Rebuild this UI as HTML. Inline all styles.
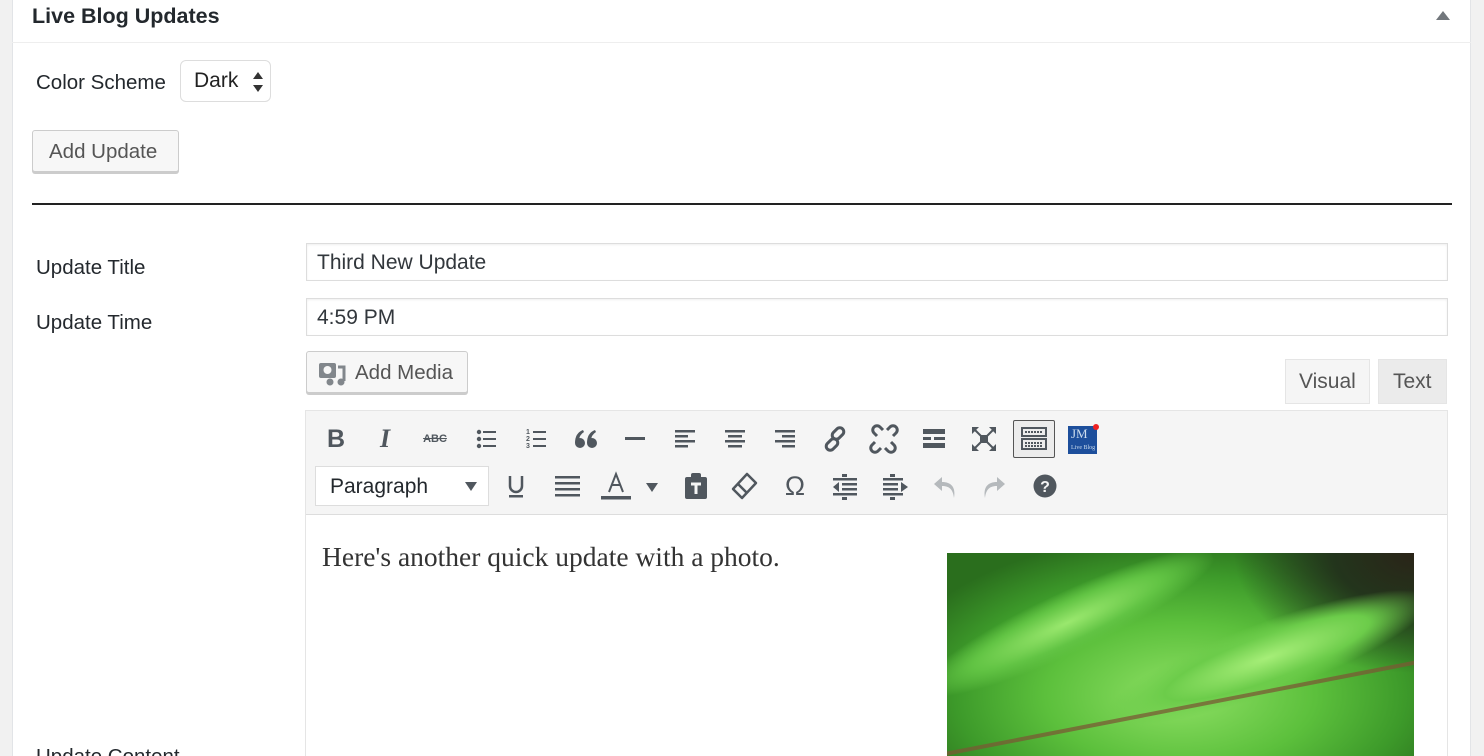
<!DOCTYPE html>
<html><head><meta charset="utf-8"><style>
*{box-sizing:border-box;margin:0;padding:0}
html,body{width:1484px;height:756px;overflow:hidden}
body{background:#f1f1f1;font-family:"Liberation Sans",sans-serif;color:#23282d;position:relative}
.panel{position:absolute;left:12px;top:-2px;width:1459px;height:758px;background:#fff;border:1px solid #e2e4e7;border-bottom:none}
.a{position:absolute}
.lbl{font-size:20.5px;color:#23282d}
.inp{position:absolute;left:306px;width:1142px;height:38px;border:1px solid #ddd;box-shadow:inset 0 1px 2px rgba(0,0,0,.07);font-size:21px;padding:7px 10px;color:#32373c}
.btn{position:absolute;background:#f7f7f7;border:1px solid #ccc;border-radius:3px;box-shadow:0 2px 0 #ccc;font-size:20.5px;color:#555}
.ic{position:absolute;top:0;width:30px;height:30px;display:flex;align-items:center;justify-content:center;color:#50575e;font-weight:bold}
</style></head><body>
<div class="panel"></div>
<div class="a" style="left:12px;top:42px;width:1459px;height:1px;background:#eee"></div>
<div class="a" style="left:32px;top:4px;font-size:21.5px;font-weight:bold;color:#23282d">Live Blog Updates</div>
<div class="a" style="left:1436px;top:11px;width:0;height:0;border-left:7px solid transparent;border-right:7px solid transparent;border-bottom:9px solid #72777c"></div>
<div class="a lbl" style="left:36px;top:71px">Color Scheme</div>
<div class="a" style="left:180px;top:60px;width:91px;height:42px;border:1px solid #ddd;border-radius:6px;font-size:21px;padding:8px 0 0 13px;color:#222">Dark</div>
<svg class="a" style="left:252px;top:71px" width="12" height="22"><path d="M6 1 L11 8 H1Z M6 21 L11 14 H1Z" fill="#333"/></svg>
<div class="btn" style="left:32px;top:130px;width:147px;height:42px;padding:9px 0 0 16px">Add Update</div>
<div class="a" style="left:32px;top:203px;width:1420px;height:2px;background:#222"></div>
<div class="a lbl" style="left:36px;top:256px">Update Title</div>
<div class="a lbl" style="left:36px;top:311px">Update Time</div>
<div class="inp" style="top:243px">Third New Update</div>
<div class="inp" style="top:298px">4:59 PM</div>
<div class="btn" style="left:306px;top:351px;width:162px;height:42px;padding:9px 0 0 48px">Add Media</div>
<svg class="a" style="left:318px;top:361px" width="28" height="26"><rect x="1" y="2" width="17" height="15" rx="2" fill="#82878c"/><circle cx="9.5" cy="9" r="4" fill="#f7f7f7"/><path d="M20 6 h6 v14" stroke="#82878c" stroke-width="3" fill="none"/><circle cx="23" cy="21" r="3.5" fill="#82878c"/><circle cx="12" cy="21" r="3.5" fill="#82878c"/></svg>
<div class="a" style="left:1285px;top:359px;width:85px;height:45px;background:#f5f5f5;border:1px solid #e5e5e5;font-size:21px;color:#555;padding:10px 0 0 13px">Visual</div>
<div class="a" style="left:1378px;top:359px;width:69px;height:45px;background:#ebebeb;border:1px solid #e5e5e5;font-size:21px;color:#555;padding:10px 0 0 14px">Text</div>
<div class="a" style="left:305px;top:410px;width:1143px;height:346px;border:1px solid #e5e5e5;border-bottom:none;background:#fff"></div>
<div class="a" style="left:306px;top:411px;width:1141px;height:104px;background:#f5f5f5;border-bottom:1px solid #ddd"></div>
<div class="a" style="left:0;top:424px;width:1484px;height:30px">
<div class="ic" style="left:321px;font-size:25px">B</div>
<div class="ic" style="left:370px;font-size:26px;font-style:italic;font-family:'Liberation Serif',serif">I</div>
<div class="ic" style="left:420px;font-size:11px;text-decoration:line-through">ABC</div>
<svg class="ic" style="left:471px" viewBox="0 0 30 30"><g fill="#50575e"><circle cx="8" cy="8" r="2.2"/><circle cx="8" cy="15" r="2.2"/><circle cx="8" cy="22" r="2.2"/><rect x="12" y="7" width="13" height="2"/><rect x="12" y="14" width="13" height="2"/><rect x="12" y="21" width="13" height="2"/></g></svg>
<svg class="ic" style="left:521px" viewBox="0 0 30 30"><g fill="#50575e"><text x="5" y="10" font-size="7">1</text><text x="5" y="17" font-size="7">2</text><text x="5" y="24" font-size="7">3</text><rect x="12" y="7" width="13" height="2"/><rect x="12" y="14" width="13" height="2"/><rect x="12" y="21" width="13" height="2"/></g></svg>
<svg class="ic" style="left:571px" viewBox="0 0 30 30"><g fill="#50575e"><circle cx="9" cy="19" r="5"/><path d="M4 19 Q4 9 12 6 L13 8 Q8 11 8 17Z"/><circle cx="21" cy="19" r="5"/><path d="M16 19 Q16 9 24 6 L25 8 Q20 11 20 17Z"/></g></svg>
<svg class="ic" style="left:620px" viewBox="0 0 30 30"><rect x="5" y="13" width="20" height="3" fill="#50575e"/></svg>
<svg class="ic" style="left:670px" viewBox="0 0 30 30"><g fill="#50575e"><rect x="5" y="6" width="20" height="2.5"/><rect x="5" y="11" width="13" height="2.5"/><rect x="5" y="16" width="20" height="2.5"/><rect x="5" y="21" width="13" height="2.5"/></g></svg>
<svg class="ic" style="left:720px" viewBox="0 0 30 30"><g fill="#50575e"><rect x="5" y="6" width="20" height="2.5"/><rect x="8" y="11" width="14" height="2.5"/><rect x="5" y="16" width="20" height="2.5"/><rect x="8" y="21" width="14" height="2.5"/></g></svg>
<svg class="ic" style="left:770px" viewBox="0 0 30 30"><g fill="#50575e"><rect x="5" y="6" width="20" height="2.5"/><rect x="12" y="11" width="13" height="2.5"/><rect x="5" y="16" width="20" height="2.5"/><rect x="12" y="21" width="13" height="2.5"/></g></svg>
<svg class="ic" style="left:820px" viewBox="0 0 30 30"><g fill="none" stroke="#50575e" stroke-width="3"><rect x="14" y="3" width="8" height="13" rx="4" transform="rotate(45 18 9.5)"/><rect x="8" y="14" width="8" height="13" rx="4" transform="rotate(45 12 20.5)"/></g></svg>
<svg class="ic" style="left:869px" viewBox="0 0 30 30"><g fill="none" stroke="#50575e" stroke-width="3"><path d="M8 12 L5 9 a4 4 0 0 1 6-6 l3 3 M22 18 l3 3 a4 4 0 0 1-6 6 l-3-3 M18 6 l3-3 a4 4 0 0 1 6 6 l-3 3 M12 24 l-3 3 a4 4 0 0 1-6-6 l3-3"/></g></svg>
<svg class="ic" style="left:919px" viewBox="0 0 30 30"><g fill="#50575e"><rect x="4" y="5" width="22" height="5"/><rect x="4" y="13" width="8" height="3"/><rect x="15" y="13" width="11" height="3"/><rect x="4" y="19" width="22" height="5"/></g></svg>
<svg class="ic" style="left:969px" viewBox="0 0 30 30"><g fill="#50575e"><rect x="11" y="11" width="8" height="8"/><path d="M3 3h7l-7 7z M27 3v7l-7-7z M3 27v-7l7 7z M27 27h-7l7-7z"/></g><path d="M5 5l7 7M25 5l-7 7M5 25l7-7M25 25l-7-7" stroke="#50575e" stroke-width="2"/></svg>
<div class="a" style="left:1013px;top:-4px;width:42px;height:38px;border:1px solid #555;border-radius:2px;background:#ececec"></div>
<svg class="ic" style="left:1019px" viewBox="0 0 30 30"><g fill="none" stroke="#50575e" stroke-width="2"><rect x="3" y="4" width="24" height="8"/><rect x="3" y="15" width="24" height="10"/></g><path d="M6 8h18M6 19h18M6 22h18" stroke="#50575e" stroke-width="2" stroke-dasharray="2 1"/></svg>
<div class="a" style="left:1068px;top:2px;width:29px;height:28px;background:#1d4f9c;color:#cde;font-size:13px;font-family:'Liberation Serif',serif;padding:2px 0 0 3px;line-height:11px">JM<br><span style="font-size:6px">Live Blog</span></div>
<div class="a" style="left:1093px;top:0;width:6px;height:6px;border-radius:3px;background:#e22"></div>
</div>
<div class="a" style="left:315px;top:466px;width:174px;height:40px;background:#fff;border:1px solid #ddd;font-size:21px;color:#23282d;padding:8px 0 0 14px">Paragraph</div>
<div class="a" style="left:465px;top:482px;border-left:6px solid transparent;border-right:6px solid transparent;border-top:9px solid #50575e"></div>
<div class="a" style="left:0;top:471px;width:1484px;height:30px">
<svg class="ic" style="left:501px" viewBox="0 0 30 30"><path d="M9 5v10a6 6 0 0 0 12 0V5" stroke="#50575e" stroke-width="2.5" fill="none"/><rect x="8" y="24" width="14" height="2.5" fill="#50575e"/></svg>
<svg class="ic" style="left:552px" viewBox="0 0 30 30"><g fill="#50575e"><rect x="3" y="5" width="25" height="2.5"/><rect x="3" y="11" width="25" height="2.5"/><rect x="3" y="17" width="25" height="2.5"/><rect x="3" y="23" width="25" height="2.5"/></g></svg>
<svg class="ic" style="left:601px" viewBox="0 0 30 30"><path d="M8 21 L15 3 L22 21 M11 14h8" stroke="#50575e" stroke-width="2" fill="none"/><rect x="0" y="25" width="32" height="3.5" fill="#50575e"/></svg>
<div class="a" style="left:646px;top:12px;border-left:6px solid transparent;border-right:6px solid transparent;border-top:9px solid #50575e"></div>
<svg class="ic" style="left:681px" viewBox="0 0 30 30"><rect x="4" y="6" width="22" height="22" rx="2" fill="#50575e"/><rect x="10" y="2" width="10" height="6" rx="2" fill="#50575e"/><path d="M10 13h10M15 13v10" stroke="#f5f5f5" stroke-width="3"/></svg>
<svg class="ic" style="left:729px" viewBox="0 0 30 30"><path d="M18 3 L27 12 L13 27 L4 18Z M9 13 L18 22" stroke="#50575e" stroke-width="2.5" fill="none" stroke-linejoin="round"/></svg>
<div class="ic" style="left:780px;font-size:27px;font-weight:normal">Ω</div>
<svg class="ic" style="left:830px" viewBox="0 0 30 30"><g fill="#50575e"><rect x="12" y="3" width="5" height="3"/><rect x="3" y="7" width="24" height="2.5"/><rect x="12" y="12" width="15" height="2.5"/><rect x="12" y="17" width="15" height="2.5"/><rect x="3" y="22" width="24" height="2.5"/><path d="M3 16 L9 11 V21Z"/><rect x="12" y="26" width="5" height="3"/></g></svg>
<svg class="ic" style="left:880px" viewBox="0 0 30 30"><g fill="#50575e"><rect x="10" y="3" width="5" height="3"/><rect x="3" y="7" width="20" height="2.5"/><rect x="3" y="12" width="15" height="2.5"/><rect x="3" y="17" width="15" height="2.5"/><rect x="3" y="22" width="20" height="2.5"/><path d="M28 16 L21 11 V21Z"/><rect x="10" y="26" width="5" height="3"/></g></svg>
<svg class="ic" style="left:930px" viewBox="0 0 30 30"><path d="M12 6 L4 13 L12 20 V15 C19 15 23 18 24 27 C26 16 21 11 12 11Z" fill="#b5b9bc"/></svg>
<svg class="ic" style="left:979px" viewBox="0 0 30 30"><path d="M18 6 L26 13 L18 20 V15 C11 15 7 18 6 27 C4 16 9 11 18 11Z" fill="#b5b9bc"/></svg>
<svg class="ic" style="left:1030px" viewBox="0 0 30 30"><circle cx="15" cy="15" r="11.5" fill="#50575e"/><text x="15" y="21" text-anchor="middle" font-size="16" font-weight="bold" fill="#f5f5f5" font-family="Liberation Sans">?</text></svg>
</div>
<div class="a" style="left:322px;top:541px;font-family:'Liberation Serif',serif;font-size:27.5px;color:#333">Here's another quick update with a photo.</div>
<div class="a" style="left:947px;top:553px;width:467px;height:203px;overflow:hidden;background:radial-gradient(ellipse 180px 120px at 100% 0%,#2a2418 0%,#23351c 45%,transparent 100%),radial-gradient(ellipse 300px 160px at 50% 70%,#8ee064 0%,#5cc03c 45%,#3d9a2a 75%,#2a6e1d 100%),#2e7a22">
<div style="position:absolute;left:-40px;top:40px;width:320px;height:60px;transform:rotate(-25deg);background:radial-gradient(ellipse,#9ae86e 0%,#62c444 45%,transparent 72%)"></div>
<div style="position:absolute;left:150px;top:70px;width:340px;height:70px;transform:rotate(-20deg);background:radial-gradient(ellipse,#a6ee78 0%,#6ccc4a 45%,transparent 72%)"></div>
<div style="position:absolute;left:-10px;top:150px;width:520px;height:4px;transform:rotate(-11deg);background:#7a5a34;opacity:.75"></div>
</div>
<div class="a" style="left:0;top:745px;width:300px;height:11px;overflow:hidden"><div class="lbl" style="position:absolute;left:36px;top:0">Update Content</div></div>
</body></html>
